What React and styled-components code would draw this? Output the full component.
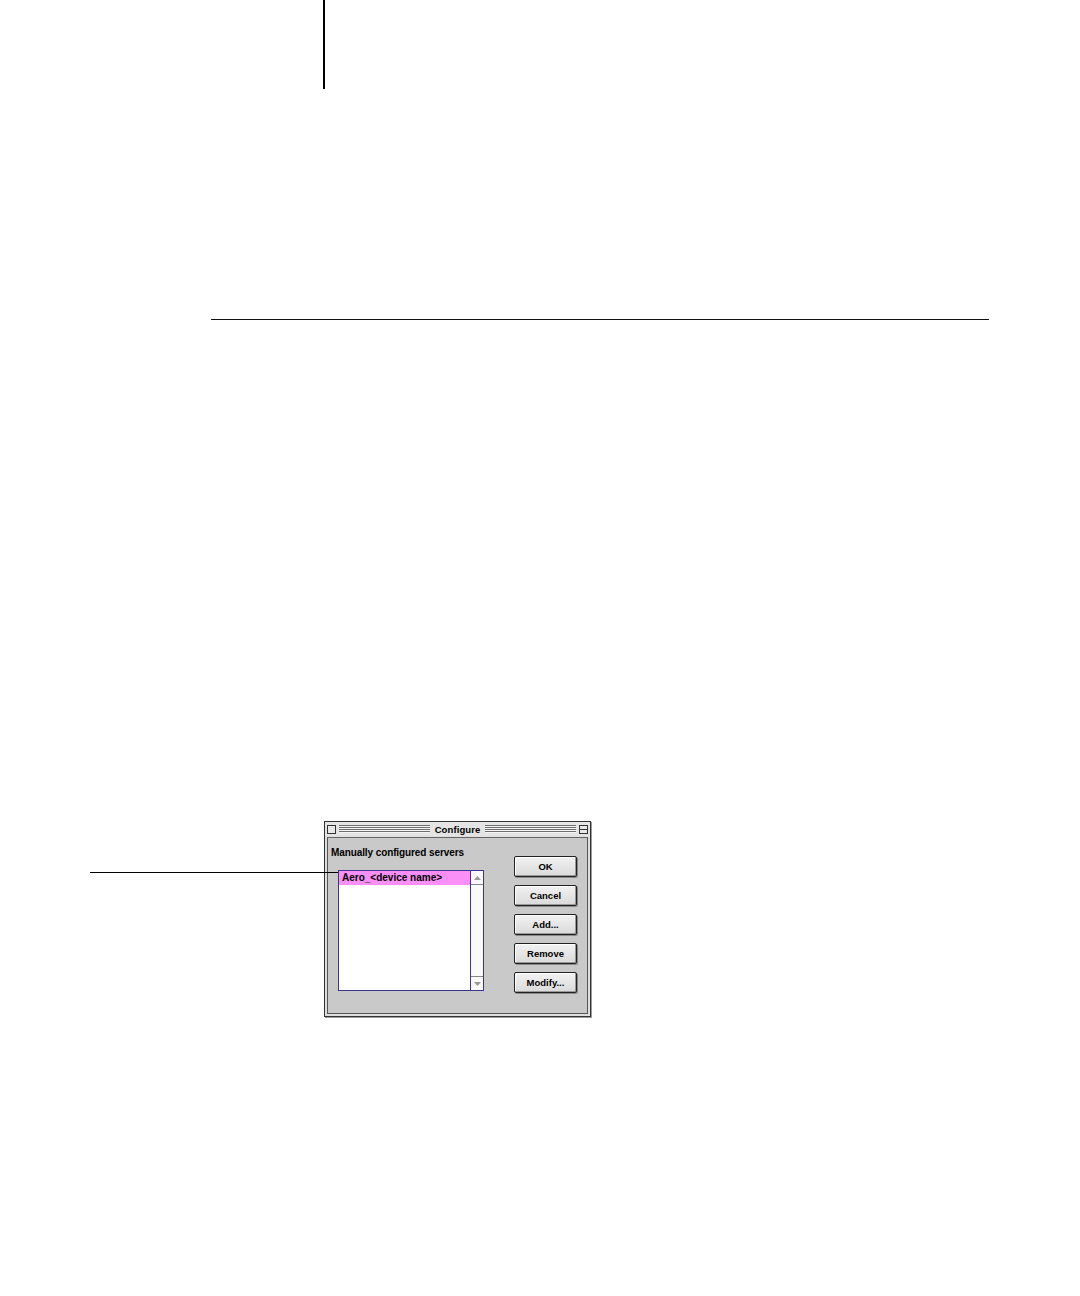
import React from 'react';
import styled, { createGlobalStyle } from 'styled-components';

const GlobalStyle = createGlobalStyle`
  html, body {
    margin: 0;
    padding: 0;
    background: #ffffff;
  }
  body {
    font-family: "Liberation Sans", Arial, sans-serif;
  }
`;

const Page = styled.div`
  width: 1080px;
  height: 1296px;
  background: #fff;
  overflow: hidden;
`;

const ChapterMark = styled.div`
  width: 2px;
  height: 89px;
  margin-left: 323px;
  background: #000;
`;

const Rule = styled.hr`
  border: none;
  height: 1px;
  background: #111;
  width: 778px;
  margin: 230px 0 0 211px;
`;

const Figure = styled.div`
  position: relative;
  margin: 501px 0 0 324px;
  display: flex;
`;

const Callout = styled.div`
  position: absolute;
  left: -234px;
  top: 51px;
  width: 248px;
  height: 1px;
  background: #000;
  z-index: 2;
`;

const Window = styled.div`
  width: 265px;
  height: 194px;
  border: 1px solid #333;
  background: #dedede;
  display: flex;
  flex-direction: column;
  box-shadow: 1px 1px 0 #9a9a9a;
`;

const TitleBar = styled.div`
  height: 14px;
  display: flex;
  align-items: center;
  gap: 3px;
  padding: 0 2px 0 2px;
  background: #e4e4e4;
`;

const Stripes = styled.div`
  flex: 1;
  height: 8px;
  background: repeating-linear-gradient(
    to bottom,
    #6e6e6e 0px,
    #6e6e6e 1px,
    #f4f4f4 1px,
    #f4f4f4 2px
  );
`;

const TitleBox = styled.div`
  width: 9px;
  height: 9px;
  border: 1px solid #333;
  background: #e8e8e8;
  box-sizing: border-box;
  position: relative;

  ${(p) =>
    p.$zoom &&
    `
    &::after {
      content: '';
      position: absolute;
      left: 0;
      right: 0;
      top: 3px;
      height: 1px;
      background: #333;
    }
  `}
`;

const Title = styled.span`
  font-size: 9.5px;
  font-weight: bold;
  color: #000;
  padding: 0 2px;
  letter-spacing: 0.1px;
`;

const Body = styled.div`
  flex: 1;
  margin: 1px 2px 2px 2px;
  border: 1px solid #555;
  border-top-color: #666;
  background: #c9c9c9;
  display: flex;
  padding: 0 0 0 3px;
`;

const LeftCol = styled.div`
  display: flex;
  flex-direction: column;
  width: 175px;
`;

const Label = styled.div`
  font-size: 10px;
  font-weight: bold;
  color: #000;
  margin-top: 9px;
  height: 13px;
  letter-spacing: -0.1px;
`;

const ListBox = styled.div`
  margin: 10px 0 0 7px;
  width: 144px;
  height: 119px;
  border: 1px solid #3c3590;
  background: #fff;
  display: flex;
`;

const ListItems = styled.div`
  flex: 1;
`;

const Item = styled.div`
  height: 14px;
  line-height: 14px;
  font-size: 10px;
  font-weight: bold;
  padding-left: 3px;
  color: #000;
  background: ${(p) => (p.$selected ? '#f98ff7' : 'transparent')};
`;

const ScrollBar = styled.div`
  width: 12px;
  border-left: 1px solid #3c3590;
  background: #fafafa;
  display: flex;
  flex-direction: column;
  justify-content: space-between;
`;

const Arrow = styled.div`
  height: 13px;
  display: flex;
  align-items: center;
  justify-content: center;
  border-${(p) => (p.$down ? 'top' : 'bottom')}: 1px solid #888;
`;

const ButtonCol = styled.div`
  display: flex;
  flex-direction: column;
  gap: 8px;
  margin: 18px 0 0 8px;
`;

const Button = styled.button`
  width: 63px;
  height: 21px;
  padding: 0;
  font-family: "Liberation Sans", Arial, sans-serif;
  font-size: 9.5px;
  font-weight: bold;
  color: #000;
  background: linear-gradient(to bottom, #f2f2f2, #dadada);
  border: 1px solid #222;
  border-radius: 2px;
  box-shadow: inset -1px -1px 0 #999, inset 1px 1px 0 #fff, 1px 1px 0 #888;
`;

const ArrowIcon = ({ down }) => (
  <svg width="7" height="4" viewBox="0 0 7 4">
    {down ? (
      <polygon points="0,0 7,0 3.5,4" fill="#999" />
    ) : (
      <polygon points="0,4 7,4 3.5,0" fill="#999" />
    )}
  </svg>
);

const buttons = ['OK', 'Cancel', 'Add...', 'Remove', 'Modify...'];

const App = () => {
  return (
    <>
      <GlobalStyle />
      <Page>
        <ChapterMark />
        <Rule />
        <Figure>
          <Callout />
          <Window>
            <TitleBar>
              <TitleBox />
              <Stripes />
              <Title>Configure</Title>
              <Stripes />
              <TitleBox $zoom />
            </TitleBar>
            <Body>
              <LeftCol>
                <Label>Manually configured servers</Label>
                <ListBox>
                  <ListItems>
                    <Item $selected>Aero_&lt;device name&gt;</Item>
                  </ListItems>
                  <ScrollBar>
                    <Arrow>
                      <ArrowIcon />
                    </Arrow>
                    <Arrow $down>
                      <ArrowIcon down />
                    </Arrow>
                  </ScrollBar>
                </ListBox>
              </LeftCol>
              <ButtonCol>
                {buttons.map((b) => (
                  <Button key={b}>{b}</Button>
                ))}
              </ButtonCol>
            </Body>
          </Window>
        </Figure>
      </Page>
    </>
  );
};

export default App;
